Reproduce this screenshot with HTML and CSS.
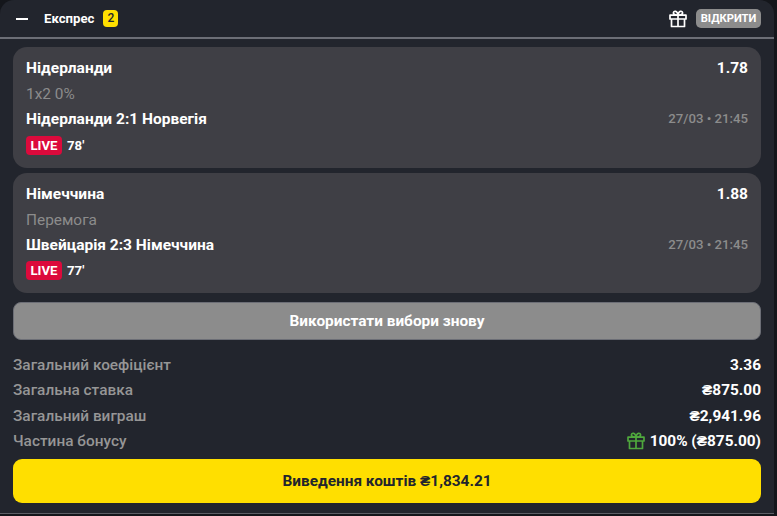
FILE: index.html
```html
<!DOCTYPE html>
<html>
<head>
  <title>Експрес</title>
  <link rel="stylesheet" href="styles.css">
</head>
<body>
  <div class="panel">
    <div class="header">
      <span class="collapse"></span>
      <span class="header-title">Експрес</span>
      <span class="count">2</span>
      <svg class="gift gift-head" viewBox="0 0 18 18"><use href="#gift"></use></svg>
      <span class="open-btn">ВІДКРИТИ</span>
    </div>

    <div class="content">
      <div class="card">
        <div class="row">
          <span class="strong">Нідерланди</span>
          <span class="strong">1.78</span>
        </div>
        <div class="market">1x2 0%</div>
        <div class="row">
          <span class="strong">Нідерланди 2:1 Норвегія</span>
          <span class="date">27/03 • 21:45</span>
        </div>
        <div class="live-row">
          <span class="live">LIVE</span>
          <span class="minute">78'</span>
        </div>
      </div>

      <div class="card">
        <div class="row">
          <span class="strong">Німеччина</span>
          <span class="strong">1.88</span>
        </div>
        <div class="market">Перемога</div>
        <div class="row">
          <span class="strong">Швейцарія 2:3 Німеччина</span>
          <span class="date">27/03 • 21:45</span>
        </div>
        <div class="live-row">
          <span class="live">LIVE</span>
          <span class="minute">77'</span>
        </div>
      </div>

      <div class="reuse-btn">Використати вибори знову</div>

      <div class="totals">
        <div class="total-row">
          <span>Загальний коефіцієнт</span>
          <span class="total-value">3.36</span>
        </div>
        <div class="total-row">
          <span>Загальна ставка</span>
          <span class="total-value">₴875.00</span>
        </div>
        <div class="total-row">
          <span>Загальний виграш</span>
          <span class="total-value">₴2,941.96</span>
        </div>
        <div class="total-row">
          <span>Частина бонусу</span>
          <span class="total-value bonus">
            <svg class="gift gift-bonus" viewBox="0 0 18 18"><use href="#gift"></use></svg>
            100% (₴875.00)
          </span>
        </div>
      </div>

      <div class="cashout-btn">Виведення коштів ₴1,834.21</div>
    </div>
  </div>

  <svg class="defs" width="0" height="0">
    <symbol id="gift" viewBox="0 0 18 18">
      <path d="M2.500 9v7.500h13V9M1 5.200h16V9H1zM9 5.200v11.300M9 5.200C7.400 5.200 5 5.100 4.500 3.500 4.100 2.200 5.200 1 6.500 1.300 8 1.700 8.800 3.800 9 5.200zM9 5.200C10.600 5.200 13 5.100 13.500 3.500 13.900 2.200 12.800 1 11.500 1.300 10 1.700 9.200 3.800 9 5.200z" fill="none" stroke="currentColor" stroke-width="1.700" stroke-linejoin="round"/>
    </symbol>
  </svg>
</body>
</html>
```

FILE: styles.css
```css
body {
  margin: 0;
  background-color: #14161b;
  font-family: Roboto, "Liberation Sans", sans-serif;
  color: #fff;
  overflow: hidden;
}

.panel {
  width: 774px;
  height: 513px;
  background-color: #22252d;
  border-radius: 14px 14px 0 0;
  border-bottom: 1px solid #5d5f66;
}

.header {
  display: flex;
  align-items: center;
  height: 37px;
  padding: 0 13px 0 16px;
  border-bottom: 2px solid #6c6e76;
}

.collapse {
  width: 12px;
  height: 2px;
  background-color: #fff;
}

.header-title {
  margin-left: 16px;
  font-size: 13.2px;
  font-weight: 700;
}

.count {
  margin-left: 9px;
  width: 15px;
  height: 17px;
  line-height: 17px;
  text-align: center;
  background-color: #ffdf00;
  border-radius: 4px;
  color: #22252d;
  font-size: 12px;
  font-weight: 500;
}

.gift {
  display: block;
  flex: none;
}

.gift-head {
  width: 18px;
  height: 18px;
  margin-left: auto;
  color: #fff;
}

.open-btn {
  margin-left: 9px;
  width: 65px;
  height: 19px;
  line-height: 19px;
  text-align: center;
  background-color: #8c8c8c;
  border-radius: 5px;
  font-size: 11.2px;
  font-weight: 700;
}

.content {
  display: flex;
  flex-direction: column;
  padding: 8px 13px 0;
}

.card {
  height: 120.6px;
  margin-bottom: 5px;
  padding: 8.8px 13px 0;
  box-sizing: border-box;
  background-color: #3f3f45;
  border-radius: 14px;
}

.row {
  display: flex;
  justify-content: space-between;
  align-items: center;
  height: 25.4px;
}

.strong {
  font-size: 15.5px;
  font-weight: 700;
}

.market {
  height: 25.1px;
  line-height: 26.4px;
  font-size: 15.4px;
  color: #8c8c8c;
}

.date {
  font-size: 13.2px;
  font-weight: 500;
  color: #8c8c8c;
}

.live-row {
  display: flex;
  align-items: center;
  gap: 5px;
  margin-top: 4.2px;
}

.live {
  width: 36px;
  height: 19px;
  line-height: 19px;
  text-align: center;
  background-color: #dc0a3c;
  border-radius: 4px;
  font-size: 13.2px;
  font-weight: 700;
}

.minute {
  font-size: 13.2px;
  font-weight: 700;
}

.reuse-btn {
  height: 36px;
  line-height: 36px;
  margin-top: 3.8px;
  text-align: center;
  background-color: #8c8c8c;
  border: 1px solid #6c6e76;
  border-radius: 8px;
  font-size: 15.4px;
  font-weight: 700;
}

.totals {
  margin-top: 12.2px;
}

.total-row {
  display: flex;
  justify-content: space-between;
  align-items: center;
  height: 25.4px;
  font-size: 15.4px;
  font-weight: 500;
  color: #969696;
}

.total-value {
  font-weight: 700;
  color: #fff;
}

.bonus {
  display: flex;
  align-items: center;
  gap: 5px;
}

.gift-bonus {
  width: 18px;
  height: 18px;
  color: #4fa83d;
}

.cashout-btn {
  height: 44px;
  line-height: 44px;
  margin-top: 4.8px;
  text-align: center;
  background-color: #ffdf00;
  border-radius: 9px;
  color: #22252d;
  font-size: 15.4px;
  font-weight: 700;
}

.defs {
  position: absolute;
}
```
